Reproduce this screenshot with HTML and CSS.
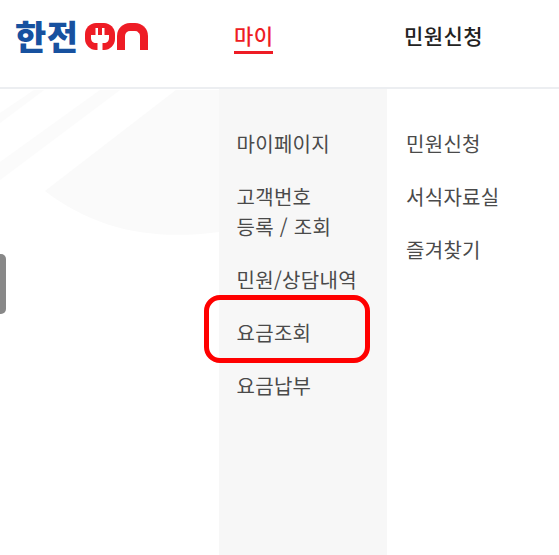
FILE: index.html
```html
<!DOCTYPE html>
<html lang="ko">
<head>
    <meta charset="UTF-8">
    <meta name="viewport" content="width=device-width, initial-scale=1.0">
    <title>한전ON</title>
    <link rel="stylesheet" href="styles.css">
</head>
<body>
    <header class="header">
        <a class="logo" href="#">
            <span class="logo-text">한전</span>
            <svg class="logo-plug" viewBox="0 0 30 27" width="30" height="27">
                <path fill="#ee1c25" d="M11 0H19C25 0 30 5 30 11V16C30 22 25 27 19 27H11C5 27 0 22 0 16V11C0 5 5 0 11 0Z"/>
                <path fill="#fff" d="M6 12H24V15C24 18 22 20 19 20H17.5V27H12.5V20H11C8 20 6 18 6 15Z"/>
                <rect fill="#fff" x="10.5" y="5" width="2.5" height="7"/>
                <rect fill="#fff" x="17" y="5" width="2.5" height="7"/>
            </svg>
            <span class="logo-n"></span>
        </a>
        <nav class="gnb">
            <a class="gnb-item active" href="#">마이</a>
            <a class="gnb-item" href="#">민원신청</a>
        </nav>
    </header>
    <div class="menu-area">
        <svg class="watermark" viewBox="0 0 219 466" width="219" height="466">
            <path fill="#fafafa" d="M45 102L176 1H219V143C150 152 95 140 45 102Z"/>
            <path fill="#fbfbfb" d="M0 73L100 1H120L0 91Z"/>
            <path fill="#fbfbfb" d="M0 24L34 1H44L0 34Z"/>
        </svg>
        <ul class="sub-menu mine">
            <li>마이페이지</li>
            <li>고객번호<br>등록 / 조회</li>
            <li>민원/상담내역</li>
            <li>요금조회</li>
            <li>요금납부</li>
        </ul>
        <ul class="sub-menu civil">
            <li>민원신청</li>
            <li>서식자료실</li>
            <li>즐겨찾기</li>
        </ul>
        <div class="highlight"></div>
    </div>
    <div class="scroll-thumb"></div>
</body>
</html>
```

FILE: styles.css
```css
* {
    box-sizing: border-box;
}
html, body {
    height: 100%;
}
body {
    margin: 0;
    background: #fff;
    font-family: "Noto Sans CJK KR", "Noto Sans", sans-serif;
    color: #333;
    overflow: hidden;
    display: flex;
    flex-direction: column;
}
a {
    text-decoration: none;
    color: inherit;
}
ul {
    list-style: none;
    margin: 0;
    padding: 0;
}
.header {
    height: 89px;
    flex: none;
    display: flex;
    border-bottom: 2px solid #eceef1;
}
.logo {
    width: 234px;
    padding: 16px 0 0 15px;
    display: flex;
    align-items: flex-start;
}
.logo-text {
    font-size: 34px;
    line-height: 40px;
    font-weight: 900;
    letter-spacing: 0.5px;
    color: #17519f;
    width: 70px;
}
.logo-plug {
    margin-top: 7px;
}
.logo-n {
    width: 31px;
    height: 27px;
    margin: 7px 0 0 2px;
    border: 8px solid #ee1c25;
    border-bottom: 0;
    border-radius: 13px 13px 0 0;
}
.gnb {
    display: flex;
    align-items: flex-start;
    padding-top: 19px;
}
.gnb-item {
    font-size: 21px;
    line-height: 32px;
    font-weight: 500;
    color: #222;
    letter-spacing: 0.4px;
    margin-left: -1px;
}
.gnb-item.active {
    width: 39px;
    height: 35px;
    margin: 0 132px 0 0;
    color: #ee1c25;
    border-bottom: 3px solid #ee1c25;
    white-space: nowrap;
}
.menu-area {
    flex: 1;
    position: relative;
    display: flex;
    padding-left: 219px;
}
.watermark {
    position: absolute;
    top: 0;
    left: 0;
}
.sub-menu {
    position: relative;
    padding: 40px 18px 0;
    font-size: 20px;
    line-height: 30px;
    letter-spacing: 0.3px;
    color: #4a4a4a;
    display: flex;
    flex-direction: column;
    gap: 23px;
}
.sub-menu.mine {
    width: 168px;
    background: #f7f7f7;
    padding-left: 17.5px;
}
.sub-menu.civil {
    width: 172px;
    padding-left: 19px;
}
.highlight {
    position: absolute;
    left: 204px;
    top: 206px;
    width: 166px;
    height: 68px;
    border: 5px solid #f00;
    border-radius: 16px;
}
.scroll-thumb {
    position: absolute;
    left: 0;
    top: 254px;
    width: 6px;
    height: 60px;
    background: #888;
    border-radius: 0 5px 5px 0;
}
```
